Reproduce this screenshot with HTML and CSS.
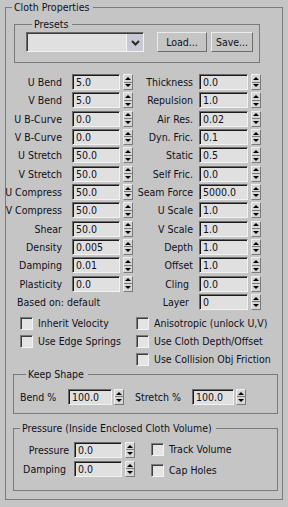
FILE: index.html
```html
<!DOCTYPE html>
<html lang="en">
<head>
    <meta charset="UTF-8">
    <meta name="viewport" content="width=device-width, initial-scale=1.0">
    <title>Cloth Properties</title>
    <link rel="stylesheet" href="styles.css">
</head>
<body>
    <fieldset class="group outer">
        <legend>Cloth Properties</legend>

        <fieldset class="group presets">
            <legend>Presets</legend>
            <div class="presets-row">
                <div class="combo">
                    <span class="combo-btn">
                        <svg width="9" height="6" viewBox="0 0 9 6"><path d="M1 1 L4.5 4.5 L8 1" fill="none" stroke="#2a2a2a" stroke-width="2"/></svg>
                    </span>
                </div>
                <button class="btn load">Load...</button>
                <button class="btn save">Save...</button>
            </div>
        </fieldset>

        <div class="props">
            <div class="field l"><label>U Bend</label><input class="num" value="5.0"><span class="spin"><i class="up"></i><i class="dn"></i></span></div>
            <div class="field r"><label>Thickness</label><input class="num" value="0.0"><span class="spin"><i class="up"></i><i class="dn"></i></span></div>

            <div class="field l"><label>V Bend</label><input class="num" value="5.0"><span class="spin"><i class="up"></i><i class="dn"></i></span></div>
            <div class="field r"><label>Repulsion</label><input class="num" value="1.0"><span class="spin"><i class="up"></i><i class="dn"></i></span></div>

            <div class="field l"><label>U B-Curve</label><input class="num" value="0.0"><span class="spin"><i class="up"></i><i class="dn"></i></span></div>
            <div class="field r"><label>Air Res.</label><input class="num" value="0.02"><span class="spin"><i class="up"></i><i class="dn"></i></span></div>

            <div class="field l"><label>V B-Curve</label><input class="num" value="0.0"><span class="spin"><i class="up"></i><i class="dn"></i></span></div>
            <div class="field r"><label>Dyn. Fric.</label><input class="num" value="0.1"><span class="spin"><i class="up"></i><i class="dn"></i></span></div>

            <div class="field l"><label>U Stretch</label><input class="num" value="50.0"><span class="spin"><i class="up"></i><i class="dn"></i></span></div>
            <div class="field r"><label>Static</label><input class="num" value="0.5"><span class="spin"><i class="up"></i><i class="dn"></i></span></div>

            <div class="field l"><label>V Stretch</label><input class="num" value="50.0"><span class="spin"><i class="up"></i><i class="dn"></i></span></div>
            <div class="field r"><label>Self Fric.</label><input class="num" value="0.0"><span class="spin"><i class="up"></i><i class="dn"></i></span></div>

            <div class="field l"><label>U Compress</label><input class="num" value="50.0"><span class="spin"><i class="up"></i><i class="dn"></i></span></div>
            <div class="field r"><label>Seam Force</label><input class="num" value="5000.0"><span class="spin"><i class="up"></i><i class="dn"></i></span></div>

            <div class="field l"><label>V Compress</label><input class="num" value="50.0"><span class="spin"><i class="up"></i><i class="dn"></i></span></div>
            <div class="field r"><label>U Scale</label><input class="num" value="1.0"><span class="spin"><i class="up"></i><i class="dn"></i></span></div>

            <div class="field l"><label>Shear</label><input class="num" value="50.0"><span class="spin"><i class="up"></i><i class="dn"></i></span></div>
            <div class="field r"><label>V Scale</label><input class="num" value="1.0"><span class="spin"><i class="up"></i><i class="dn"></i></span></div>

            <div class="field l"><label>Density</label><input class="num" value="0.005"><span class="spin"><i class="up"></i><i class="dn"></i></span></div>
            <div class="field r"><label>Depth</label><input class="num" value="1.0"><span class="spin"><i class="up"></i><i class="dn"></i></span></div>

            <div class="field l"><label>Damping</label><input class="num" value="0.01"><span class="spin"><i class="up"></i><i class="dn"></i></span></div>
            <div class="field r"><label>Offset</label><input class="num" value="1.0"><span class="spin"><i class="up"></i><i class="dn"></i></span></div>

            <div class="field l"><label>Plasticity</label><input class="num" value="0.0"><span class="spin"><i class="up"></i><i class="dn"></i></span></div>
            <div class="field r"><label class="short">Cling</label><input class="num" value="0.0"><span class="spin"><i class="up"></i><i class="dn"></i></span></div>

            <div class="based">Based on: default</div>
            <div class="field r"><label class="short">Layer</label><input class="num" value="0"><span class="spin"><i class="up"></i><i class="dn"></i></span></div>
        </div>

        <div class="checks">
            <div class="check"><span class="box"></span>Inherit Velocity</div>
            <div class="check"><span class="box"></span>Anisotropic (unlock U,V)</div>
            <div class="check"><span class="box"></span>Use Edge Springs</div>
            <div class="check"><span class="box"></span>Use Cloth Depth/Offset</div>
            <div class="check last"><span class="box"></span>Use Collision Obj Friction</div>
        </div>

        <fieldset class="group keep">
            <legend>Keep Shape</legend>
            <div class="keep-row">
                <label class="bend-label">Bend %</label>
                <input class="num bend" value="100.0">
                <span class="spin"><i class="up"></i><i class="dn"></i></span>
                <label class="stretch-label">Stretch %</label>
                <input class="num stretch" value="100.0">
                <span class="spin"><i class="up"></i><i class="dn"></i></span>
            </div>
        </fieldset>

        <fieldset class="group pressure">
            <legend>Pressure (Inside Enclosed Cloth Volume)</legend>
            <div class="press-body">
                <div class="press-fields">
                    <div class="field"><label>Pressure</label><input class="num" value="0.0"><span class="spin"><i class="up"></i><i class="dn"></i></span></div>
                    <div class="field"><label class="damp">Damping</label><input class="num" value="0.0"><span class="spin"><i class="up"></i><i class="dn"></i></span></div>
                </div>
                <div class="press-checks">
                    <div class="check"><span class="box"></span>Track Volume</div>
                    <div class="check"><span class="box"></span>Cap Holes</div>
                </div>
            </div>
        </fieldset>
    </fieldset>
</body>
</html>
```

FILE: styles.css
```css
body {
    margin: 0;
    padding: 1px 5px 0 5px;
    background-color: #c5c5c5;
    font-family: "DejaVu Sans Condensed", "DejaVu Sans", "Liberation Sans", sans-serif;
    font-stretch: condensed;
    font-size: 10.5px;
    color: #10101c;
}

/* group boxes */
.group {
    box-sizing: border-box;
    min-width: 0;
    margin: 0;
    padding: 0;
    border: 1px solid #7a7a7a;
}
.group legend {
    margin-left: 6px;
    padding: 0 4px 0 2px;
    line-height: 13px;
}
.outer {
    width: 278px;
}

/* presets */
.presets {
    width: 246px;
    margin: 4px 0 0 8px;
    padding: 1px 0 10px 11px;
}
.presets-row {
    display: flex;
    align-items: center;
}
.combo {
    box-sizing: border-box;
    display: flex;
    justify-content: flex-end;
    width: 118px;
    height: 20px;
    border: 1px solid;
    border-color: #6a6a6a #f2f2f2 #f2f2f2 #6a6a6a;
    box-shadow: inset 1px 1px 0 #3a3a3a;
    background-color: #e0e0e0;
}
.combo-btn {
    display: flex;
    align-items: center;
    justify-content: center;
    width: 16px;
    margin-top: 1px;
    border-left: 1px solid #f4f4f4;
    background-color: #c9c9d6;
}
.btn {
    box-sizing: border-box;
    height: 20px;
    margin: 0 0 0 13px;
    padding: 0;
    border: 1px solid;
    border-color: #ececec #6e6e6e #6e6e6e #ececec;
    background-color: #c5c5c5;
    font: inherit;
    color: #10101c;
}
.load {
    width: 50px;
}
.save {
    width: 42px;
    margin-left: 4px;
}

/* numeric fields */
.num {
    box-sizing: border-box;
    height: 16px;
    margin: 0;
    padding: 0 0 0 3px;
    border: 1px solid;
    border-color: #6a6a6a #f2f2f2 #f2f2f2 #6a6a6a;
    box-shadow: inset 1px 1px 0 #1a1a1a;
    background-color: #e0e0e0;
    font: inherit;
    color: #10101c;
    outline: none;
}
.spin {
    box-sizing: border-box;
    display: flex;
    flex-direction: column;
    flex: none;
    width: 10px;
    height: 16px;
    border: 1px solid;
    border-color: #f0f0f0 #7a7a7a #7a7a7a #f0f0f0;
    background-color: #d6d6d6;
}
.spin i {
    flex: 1;
    display: flex;
    align-items: center;
    justify-content: center;
}
.spin i + i {
    border-top: 1px solid #7a7a7a;
}
.spin .up::after {
    content: "";
    border-left: 3px solid transparent;
    border-right: 3px solid transparent;
    border-bottom: 3px solid #000;
}
.spin .dn::after {
    content: "";
    border-left: 3px solid transparent;
    border-right: 3px solid transparent;
    border-top: 3px solid #000;
}

.props {
    display: grid;
    grid-template-columns: 127px 129px;
    grid-auto-rows: 16px;
    row-gap: 2.33px;
    margin-top: 11px;
}
.field {
    display: flex;
    align-items: center;
}
.field label {
    display: flex;
    justify-content: flex-end;
    flex: none;
    white-space: nowrap;
}
.field.l label {
    width: 56px;
    margin-right: 10px;
}
.field.l .num {
    width: 48px;
    margin-right: 3px;
}
.field.r label {
    width: 60px;
    margin-right: 6px;
}
.field.r label.short {
    width: 56px;
    margin-right: 10px;
}
.field.r .num {
    width: 49px;
    margin-right: 3px;
}
.based {
    display: flex;
    align-items: center;
    padding-left: 11px;
    white-space: nowrap;
}

/* checkboxes */
.checks {
    display: grid;
    grid-template-columns: 116px auto;
    row-gap: 5px;
    margin: 7px 0 0 14px;
}
.check {
    display: flex;
    align-items: center;
    height: 13px;
    white-space: nowrap;
}
.check.last {
    grid-column: 2;
}
.box {
    box-sizing: border-box;
    flex: none;
    width: 13px;
    height: 13px;
    margin-right: 5px;
    border: 1px solid;
    border-color: #7a7a7a #f4f4f4 #f4f4f4 #7a7a7a;
    box-shadow: inset 1px 1px 0 #3c3c3c;
    background-color: #e4e4e4;
}

/* keep shape */
.keep {
    width: 265px;
    margin: 2px 0 0 7px;
    padding: 8px 0 8px 6px;
}
.keep-row {
    display: flex;
    align-items: center;
}
.bend-label {
    width: 48px;
}
.keep .num.bend {
    width: 44px;
    margin-right: 2px;
}
.stretch-label {
    width: 57px;
    margin-left: 11px;
}
.keep .num.stretch {
    width: 42px;
    margin-right: 2px;
}

/* pressure */
.pressure {
    width: 265px;
    margin: 8px 0 8px 7px;
    padding: 7px 0 13px 0;
}
.press-body {
    display: flex;
}
.press-fields {
    display: flex;
    flex-direction: column;
    gap: 3px;
}
.press-fields label {
    width: 55px;
    margin-right: 5px;
}
.press-fields label.damp {
    width: 52px;
    margin-right: 8px;
}
.press-fields .num {
    width: 48px;
    margin-right: 3px;
}
.press-checks {
    display: flex;
    flex-direction: column;
    gap: 8px;
    margin-left: 16px;
    padding-top: 1px;
}
```
